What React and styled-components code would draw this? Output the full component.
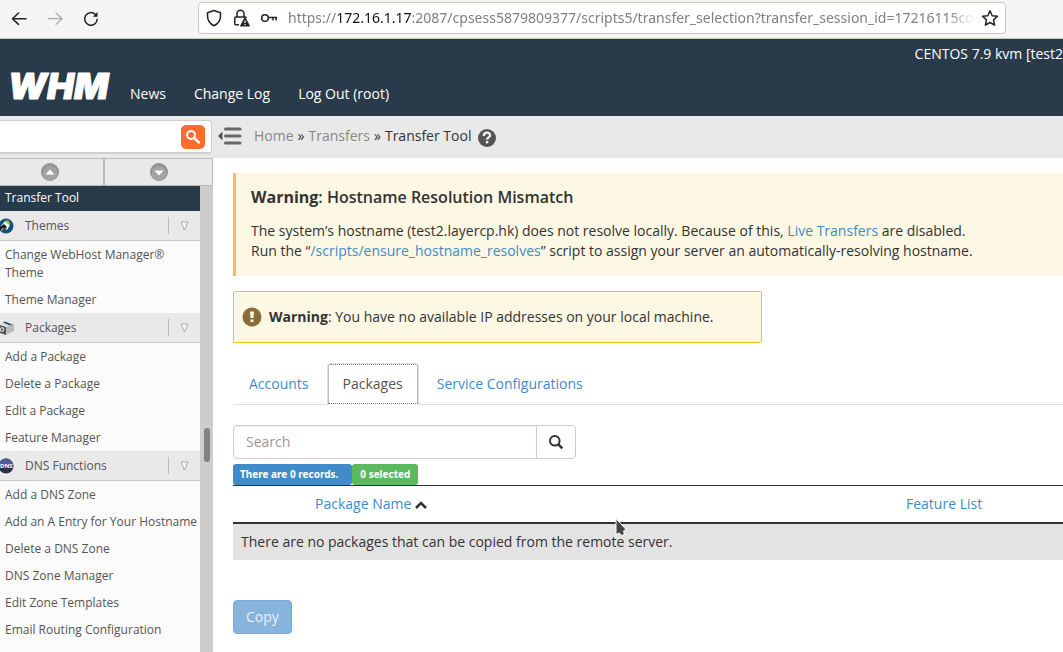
import React from "react";
import styled, { createGlobalStyle } from "styled-components";

const GlobalStyle = createGlobalStyle`
  * {
    box-sizing: border-box;
  }

  body {
    margin: 0;
    overflow: hidden;
    background: #fff;
    color: #333;
    font-family: "Open Sans", "Noto Sans", sans-serif;
    font-size: 14px;
    line-height: 20px;
  }

  a {
    color: #428bca;
    text-decoration: none;
  }

  button, input {
    font: inherit;
  }
`;

const Page = styled.div`
  display: flex;
  flex-direction: column;
  height: 100vh;
`;

const Toolbar = styled.div`
  display: flex;
  align-items: flex-start;
  height: 39px;
  padding: 2px 57px 0 9px;
  background: #f5f5f5;
  border-bottom: 1px solid #c5c9b8;
`;

const ToolButtons = styled.div`
  display: flex;
  gap: 16px;
  flex: 0 0 189px;
  padding-top: 7px;
`;

const PlainButton = styled.button`
  display: flex;
  padding: 0;
  border: 0;
  background: none;
  color: ${props => (props.disabled ? "#aaa" : "#222")};
`;

const AddressBar = styled.div`
  display: flex;
  align-items: center;
  flex: 1;
  min-width: 0;
  height: 32px;
  padding: 0 6px;
  background: #fff;
  border: 1px solid #cdc5c0;
  border-radius: 4px;
`;

const AddressIcons = styled.div`
  display: flex;
  gap: 8px;
  margin-right: 9px;
`;

const Address = styled.div`
  flex: 1;
  overflow: hidden;
  margin-right: 6px;
  font-family: "Noto Sans", sans-serif;
  color: #7f7f7f;
  white-space: nowrap;
  mask-image: linear-gradient(to left, transparent, #000 28px);

  b {
    font-weight: normal;
    color: #111;
  }
`;

const Header = styled.header`
  height: 77px;
  background: #293a4a;
  color: #fff;
`;

const ServerInfo = styled.div`
  padding-top: 5px;
  text-align: right;
  white-space: nowrap;
`;

const HeaderNav = styled.nav`
  display: flex;
  align-items: center;
  gap: 28px;
  height: 40px;
  margin-top: 2px;
  padding-left: 8px;

  a {
    margin-top: 16px;
    color: #fff;
  }
`;

const Logo = styled.svg`
  width: 104px;
  height: 36px;
  margin: 4px -10px 0 0;
  overflow: visible;
`;

const Body = styled.div`
  display: flex;
  flex: 1;
  min-height: 0;
`;

const Sidebar = styled.aside`
  display: flex;
  flex-direction: column;
  flex: 0 0 213px;
  background: #e9e9e9;
`;

const MenuSearch = styled.form`
  display: flex;
  align-items: center;
  height: 34px;
  margin: 4px 1px 4px 0;
  padding-right: 6px;
  background: #fff;
  border: 2px solid #d0d0d0;
  border-width: 1px 1px 2px 0;
  border-radius: 0 4px 4px 0;

  input {
    flex: 1;
    min-width: 0;
    border: 0;
    outline: 0;
  }
`;

const MenuSearchButton = styled.button`
  display: flex;
  align-items: center;
  justify-content: center;
  width: 24px;
  height: 24px;
  padding: 0;
  border: 0;
  border-radius: 5px;
  background: #ff6c2c;
`;

const Pager = styled.div`
  display: grid;
  grid-template-columns: 103px 1fr;
  height: 28px;
  border: 1px solid #bbb;
  border-width: 1px 1px 1px 0;
`;

const PagerButton = styled.button`
  display: flex;
  align-items: center;
  justify-content: center;
  padding: 0 4px 0 0;
  border: 0;
  background: #e9e9e9;

  & + & {
    padding: 0;
    border-left: 2px solid #bbb;
  }
`;

const MenuFrame = styled.div`
  display: flex;
  flex: 1;
  min-height: 0;
  overflow: hidden;
`;

const Menu = styled.div`
  flex: 1;
  min-width: 0;
  overflow: hidden;
  background: #fbfbfb;
  font-size: 12px;
  line-height: 18px;
`;

const ScrollTrack = styled.div`
  flex: 0 0 13px;
  padding: 242px 3px 0 4px;
  background: #cdcdcd;
`;

const ScrollThumb = styled.div`
  height: 34px;
  border-radius: 3px;
  background: #7e8484;
`;

const ActiveItem = styled.a`
  display: block;
  height: 25px;
  padding: 3px 5px;
  background: #293a4a;
  color: #fff;
`;

const GroupHeader = styled.div`
  display: flex;
  align-items: center;
  height: 30px;
  background: #e9e9e9;
  border-bottom: 1px solid #c9c9c9;
  color: #555;
`;

const GroupTitle = styled.span`
  flex: 1;
  padding-left: 11px;
`;

const GroupToggle = styled.button`
  display: flex;
  align-items: center;
  justify-content: center;
  width: 32px;
  height: 17px;
  padding: 0;
  border: 0;
  border-left: 1px solid #bbb;
  background: none;
`;

const MenuItem = styled.a`
  display: block;
  padding: 5px 0 4px 5px;
  color: #555;
`;

const Main = styled.main`
  flex: 1;
  min-width: 0;
`;

const Breadcrumb = styled.nav`
  display: flex;
  align-items: center;
  gap: 4px;
  height: 42px;
  padding: 0 0 2px 5px;
  background: #e9e9e9;
  white-space: nowrap;

  a {
    color: #888;
  }

  svg {
    flex: none;
  }
`;

const CollapseButton = styled(PlainButton)`
  margin-right: 8px;
`;

const HelpButton = styled(PlainButton)`
  margin: 3px 0 0 2px;
`;

const Content = styled.div`
  padding: 15px 0 0 20px;
`;

const Banner = styled.section`
  min-height: 103px;
  padding: 13px 15px;
  background: #fcf8e3;
  border-left: 3px solid #f8c145;

  h1 {
    margin: 0 0 13px;
    font-size: 16px;
    line-height: 22px;
    font-weight: 600;
  }

  h1 b {
    font-weight: 700;
  }

  p {
    margin: 0;
  }
`;

const Notice = styled.div`
  display: flex;
  align-items: center;
  gap: 7px;
  width: 529px;
  max-width: 100%;
  height: 52px;
  margin-top: 15px;
  padding-left: 8px;
  background: #fcf8e3;
  border: 1px solid #f1c40f;
  border-radius: 2px;
`;

const Tabs = styled.div`
  display: flex;
  gap: 2px;
  margin-top: 20px;
  border-bottom: 1px solid #ddd;
`;

const Tab = styled.button`
  height: 42px;
  margin-bottom: -1px;
  padding: 0 15px;
  border: 1px solid ${props => (props.$active ? "#ddd" : "transparent")};
  border-bottom-color: ${props => (props.$active ? "#fff" : "transparent")};
  border-radius: 4px 4px 0 0;
  outline: ${props => (props.$active ? "1px dotted #777" : "0")};
  outline-offset: -2px;
  background: ${props => (props.$active ? "#fff" : "none")};
  color: ${props => (props.$active ? "#555" : "#428bca")};
`;

const Filter = styled.form`
  display: flex;
  width: 343px;
  height: 34px;
  margin-top: 20px;

  input {
    flex: 1;
    min-width: 0;
    padding: 0 12px;
    border: 1px solid #ccc;
    border-radius: 4px 0 0 4px;
    outline: 0;
    box-shadow: inset 0 1px 1px rgba(0, 0, 0, 0.08);
  }

  input::placeholder {
    color: #999;
    opacity: 1;
  }

  button {
    display: flex;
    align-items: center;
    justify-content: center;
    width: 40px;
    margin-left: -1px;
    padding: 0;
    border: 1px solid #ccc;
    border-radius: 0 4px 4px 0;
    background: #fff;
  }
`;

const Badges = styled.div`
  display: flex;
  margin-top: 5px;
`;

const Badge = styled.span`
  height: 21px;
  padding: 0 ${props => (props.$wide ? 14 : 8)}px 0 ${props => (props.$wide ? 7 : 8)}px;
  border-radius: 3px;
  background: ${props => props.$color};
  color: #fff;
  font-family: "Noto Sans", sans-serif;
  font-size: 10px;
  font-weight: bold;
  line-height: 20px;
`;

const Table = styled.table`
  width: 100%;
  border-collapse: collapse;

  th {
    height: 37px;
    padding: 0 8px;
    border-top: 1px solid #333;
    border-bottom: 2px solid #333;
    font-weight: normal;
    text-align: left;
  }

  th:first-child {
    width: 74px;
  }

  th:last-child {
    width: 165px;
  }

  th svg {
    margin-left: 4px;
  }

  td {
    height: 37px;
    padding: 0 8px;
    background: #e3e3e3;
  }
`;

const CopyButton = styled.button`
  height: 34px;
  margin-top: 40px;
  padding: 0 12px;
  border: 1px solid #7aaad3;
  border-radius: 4px;
  background: #86b4dd;
  color: #e9f1f9;
`;

const Pointer = styled.svg`
  position: absolute;
  left: 614px;
  top: 517px;
`;

function ThemeIcon() {
  return (
    <svg width="14" height="16" viewBox="0 0 14 16">
      <circle cx="6" cy="8" r="7.5" fill="#15527b" />
      <path d="M1 8l4-5 5 4-3 5-3-2-3 3z" fill="#f4f7f2" />
      <path d="M5 3l3-1 2 3-1 2z" fill="#8cc63f" />
      <path d="M0 9l4-3 3 3-2 2-2-1-3 3z" fill="#222" />
    </svg>
  );
}

function PackageIcon() {
  return (
    <svg width="14" height="14" viewBox="0 0 14 14">
      <path d="M0 3l6-3 8 3-7 3z" fill="#d8dde0" />
      <path d="M3 1.5l2-1L13 4l-2 1z" fill="#1c4f7a" />
      <path d="M6 6l8-3v7l-8 4z" fill="#b9b9b9" />
      <path d="M0 4l6 2v8l-6-2z" fill="#555" />
      <circle cx="2" cy="8.5" r="1.8" fill="none" stroke="#fff" />
    </svg>
  );
}

function DnsIcon() {
  return (
    <svg width="14" height="16" viewBox="0 0 14 16">
      <circle cx="6" cy="8" r="7.5" fill="#28304a" />
      <path d="M-1.5 8a7.5 7.5 0 0 1 15 0z" fill="#4f5c97" />
      <text x="0" y="10" fill="#fff" fontSize="6" fontWeight="bold">DNS</text>
    </svg>
  );
}

function PagerIcon({ down }) {
  return (
    <svg width="18" height="18" viewBox="0 0 18 18">
      <circle cx="9" cy="9" r="9" fill="#929292" />
      <circle cx="9" cy="10" r="7.5" fill="#a3a3a3" />
      <path d={down ? "M4.5 7.5h9L9 12.5z" : "M4.5 11.5h9L9 6.5z"} fill="#fff" />
    </svg>
  );
}

const groups = [
  {
    title: "Themes",
    icon: <ThemeIcon />,
    items: ["Change WebHost Manager® Theme", "Theme Manager"]
  },
  {
    title: "Packages",
    icon: <PackageIcon />,
    items: ["Add a Package", "Delete a Package", "Edit a Package", "Feature Manager"]
  },
  {
    title: "DNS Functions",
    icon: <DnsIcon />,
    items: [
      "Add a DNS Zone",
      "Add an A Entry for Your Hostname",
      "Delete a DNS Zone",
      "DNS Zone Manager",
      "Edit Zone Templates",
      "Email Routing Configuration"
    ]
  }
];

function BrowserToolbar() {
  return (
    <Toolbar>
      <ToolButtons>
        <PlainButton aria-label="Back">
          <svg width="20" height="20" viewBox="0 0 20 20" fill="none" stroke="currentColor" strokeWidth="1.5" strokeLinecap="round" strokeLinejoin="round">
            <path d="M17 9.7H3.5M9.5 4L3.5 9.7l6 5.7" />
          </svg>
        </PlainButton>
        <PlainButton aria-label="Forward" disabled>
          <svg width="20" height="20" viewBox="0 0 20 20" fill="none" stroke="currentColor" strokeWidth="1.3" strokeLinecap="round" strokeLinejoin="round">
            <path d="M3.5 9.7H17M11 4l6 5.7-6 5.7" />
          </svg>
        </PlainButton>
        <PlainButton aria-label="Reload">
          <svg width="20" height="20" viewBox="0 0 20 20" fill="none" stroke="currentColor" strokeWidth="1.5" strokeLinecap="round">
            <path d="M14.5 5.6a6.3 6.3 0 1 0 1.7 4.6" />
            <path d="M16.5 3v4.7h-4.7z" fill="currentColor" stroke="none" />
          </svg>
        </PlainButton>
      </ToolButtons>
      <AddressBar>
        <AddressIcons>
          <svg width="18" height="18" viewBox="0 0 18 18" fill="none" stroke="#222" strokeWidth="1.5" strokeLinejoin="round">
            <path d="M9 1.5l6.5 2.2v3.1C15.5 11.5 13 15 9 16.7 5 15 2.5 11.5 2.5 6.8V3.7z" />
          </svg>
          <svg width="20" height="18" viewBox="0 0 20 18" fill="none" stroke="#222" strokeWidth="1.5">
            <path d="M6 8V4.8a3.5 3.5 0 0 1 7 0V8M8 15.8H4.8a1 1 0 0 1-1-1V9a1 1 0 0 1 1-1h9.4a1 1 0 0 1 1 1" />
            <path d="M14 8.5l4.5 8.5h-9z" fill="#222" strokeLinejoin="round" strokeWidth="1" />
            <path d="M14 11.5v2.5M14 15v1.2" stroke="#fff" strokeWidth="1.2" />
          </svg>
          <svg width="20" height="18" viewBox="0 0 20 18" fill="none" stroke="#222" strokeWidth="1.5">
            <circle cx="6" cy="9" r="3.3" />
            <path d="M9.3 8.5H18M14 8.5v3M17.2 8.5v3" />
          </svg>
        </AddressIcons>
        <Address role="textbox" aria-label="Address">
          https://<b>172.16.1.17</b>:2087/cpsess5879809377/scripts5/transfer_selection?transfer_session_id=17216115cop
        </Address>
        <PlainButton aria-label="Bookmark this page">
          <svg width="18" height="18" viewBox="0 0 18 18" fill="none" stroke="#222" strokeWidth="1.5" strokeLinejoin="round">
            <path d="M9 1.8l2.2 4.9 5.3.6-4 3.6 1.1 5.3L9 13.5l-4.6 2.7 1.1-5.3-4-3.6 5.3-.6z" />
          </svg>
        </PlainButton>
      </AddressBar>
    </Toolbar>
  );
}

function SideMenu() {
  return (
    <Sidebar>
      <MenuSearch>
        <input type="text" aria-label="Search menu" />
        <MenuSearchButton type="button" aria-label="Find">
          <svg width="16" height="16" viewBox="0 0 16 16" fill="none" stroke="#fff" strokeWidth="2">
            <circle cx="6" cy="6" r="4" />
            <path d="M9 9l5 4.5" strokeWidth="2.5" strokeLinecap="round" />
          </svg>
        </MenuSearchButton>
      </MenuSearch>
      <Pager>
        <PagerButton aria-label="Scroll up"><PagerIcon /></PagerButton>
        <PagerButton aria-label="Scroll down"><PagerIcon down /></PagerButton>
      </Pager>
      <MenuFrame>
        <Menu>
          <ActiveItem href="#transfer-tool">Transfer Tool</ActiveItem>
          {groups.map(group => (
            <React.Fragment key={group.title}>
              <GroupHeader>
                {group.icon}
                <GroupTitle>{group.title}</GroupTitle>
                <GroupToggle aria-label={"Toggle " + group.title}>
                  <svg width="10" height="10" viewBox="0 0 10 10">
                    <path d="M1 1h7L4.5 9z" fill="#f8f8f8" stroke="#aaa" />
                  </svg>
                </GroupToggle>
              </GroupHeader>
              {group.items.map(item => (
                <MenuItem key={item} href="#menu">{item}</MenuItem>
              ))}
            </React.Fragment>
          ))}
        </Menu>
        <ScrollTrack>
          <ScrollThumb />
        </ScrollTrack>
      </MenuFrame>
    </Sidebar>
  );
}

function App() {
  return (
    <>
      <GlobalStyle />
      <Page>
        <BrowserToolbar />
        <Header>
          <ServerInfo>CENTOS 7.9 kvm [test2</ServerInfo>
          <HeaderNav>
            <Logo viewBox="0 0 104 36" role="img" aria-label="WHM">
              <text x="0" y="29" fill="#fff" stroke="#fff" strokeLinejoin="round" fontFamily="Inter, sans-serif" fontSize="36" fontWeight="900" fontStyle="italic">
                WHM
              </text>
            </Logo>
            <a href="#news">News</a>
            <a href="#changelog">Change Log</a>
            <a href="#logout">Log Out (root)</a>
          </HeaderNav>
        </Header>
        <Body>
          <SideMenu />
          <Main>
            <Breadcrumb>
              <CollapseButton aria-label="Collapse menu">
                <svg width="24" height="18" viewBox="0 0 24 18">
                  <path d="M0 9l4.5-4.5v9z" fill="#555" />
                  <path d="M7.5 2h14.5M7.5 9h14.5M7.5 16h14.5" stroke="#666" strokeWidth="3" strokeLinecap="round" />
                </svg>
              </CollapseButton>
              <a href="#home">Home</a>
              <span>»</span>
              <a href="#transfers">Transfers</a>
              <span>»</span>
              <span>Transfer Tool</span>
              <HelpButton aria-label="Help">
                <svg width="20" height="20" viewBox="0 0 20 20">
                  <circle cx="10" cy="10" r="9" fill="#555" />
                  <path d="M6.8 8c0-4.5 6.6-4.2 6.3-.6-.2 2-3.1 2.1-3.1 4.4" fill="none" stroke="#eee" strokeWidth="2.3" />
                  <path d="M8.8 13h2.5v2.4H8.8z" fill="#eee" />
                </svg>
              </HelpButton>
            </Breadcrumb>
            <Content>
              <Banner>
                <h1><b>Warning</b>: Hostname Resolution Mismatch</h1>
                <p>
                  The system’s hostname (test2.layercp.hk) does not resolve locally. Because of this,{" "}
                  <a href="#live">Live Transfers</a> are disabled.
                  <br />
                  Run the “<a href="#resolve">/scripts/ensure_hostname_resolves</a>” script to assign your server an
                  automatically-resolving hostname.
                </p>
              </Banner>
              <Notice>
                <svg width="20" height="20" viewBox="0 0 20 20">
                  <circle cx="10" cy="10" r="9.5" fill="#8a6d3b" />
                  <path d="M8 4.5h4l-.6 6.5H8.6zM8.5 12.5h3V15h-3z" fill="#fcf8e3" />
                </svg>
                <span><b>Warning</b>: You have no available IP addresses on your local machine.</span>
              </Notice>
              <Tabs role="tablist">
                <Tab role="tab">Accounts</Tab>
                <Tab role="tab" $active>Packages</Tab>
                <Tab role="tab">Service Configurations</Tab>
              </Tabs>
              <Filter>
                <input type="text" placeholder="Search" aria-label="Search packages" />
                <button type="button" aria-label="Search">
                  <svg width="16" height="16" viewBox="0 0 16 16" fill="none" stroke="#333" strokeWidth="2">
                    <circle cx="6.8" cy="6.8" r="4.8" />
                    <path d="M10.3 10.3l4 4" strokeWidth="2.5" />
                  </svg>
                </button>
              </Filter>
              <Badges>
                <Badge $color="#428bca" $wide>There are 0 records.</Badge>
                <Badge $color="#5cb85c">0 selected</Badge>
              </Badges>
              <Table>
                <thead>
                  <tr>
                    <th aria-label="Select" />
                    <th>
                      <a href="#name">Package Name</a>
                      <svg width="12" height="8" viewBox="0 0 12 8">
                        <path d="M1 7l5-5 5 5" fill="none" stroke="#333" strokeWidth="2.5" />
                      </svg>
                    </th>
                    <th><a href="#features">Feature List</a></th>
                  </tr>
                </thead>
                <tbody>
                  <tr>
                    <td colSpan="3">There are no packages that can be copied from the remote server.</td>
                  </tr>
                </tbody>
              </Table>
              <CopyButton disabled>Copy</CopyButton>
            </Content>
          </Main>
        </Body>
      </Page>
      <Pointer width="16" height="22" viewBox="0 0 16 22">
        <path d="M2 1.5v16l3.500-1.500 1.500 2.500 3.500-1-1-3.500 2.500-1.500z" fill="#444" stroke="#fff" />
      </Pointer>
    </>
  );
}

export default App;
